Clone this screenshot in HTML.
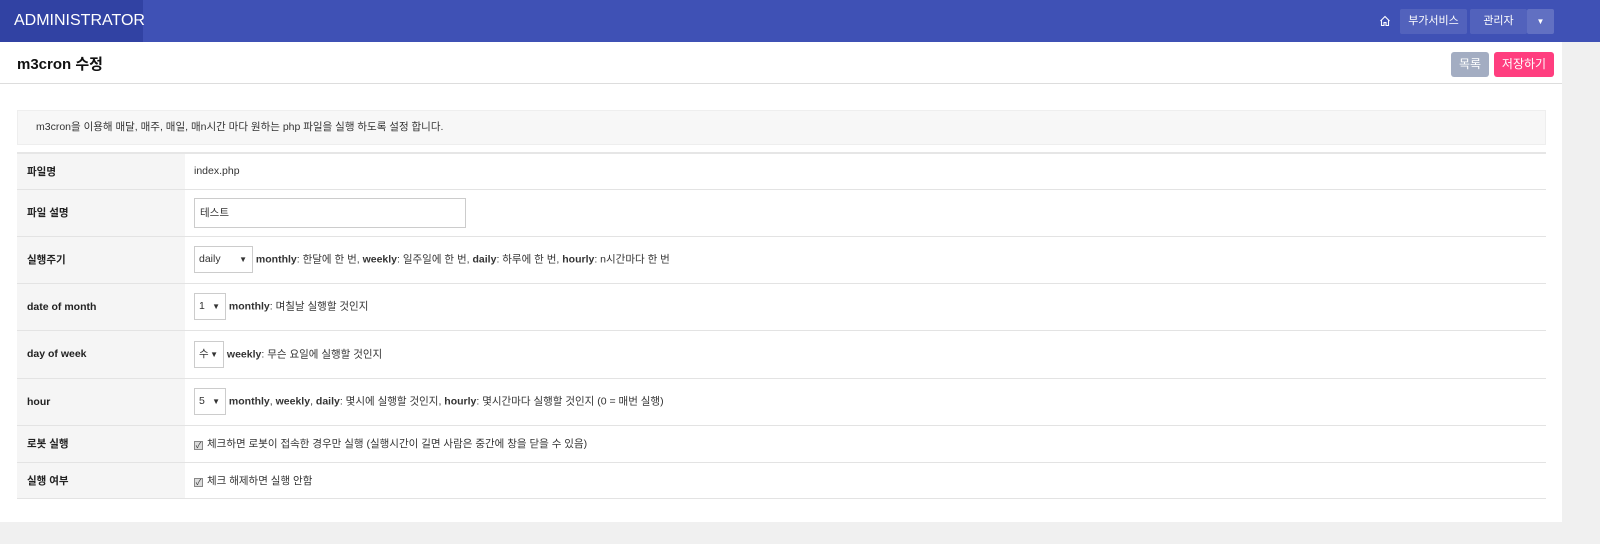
<!DOCTYPE html>
<html><head><meta charset="utf-8"><style>
*{box-sizing:border-box;margin:0;padding:0}
body{width:1600px;height:544px;background:#f0f0f0;font-family:"Liberation Sans","Noto Sans CJK KR",sans-serif;font-size:11px;color:#333;position:relative;overflow:hidden}
.hdr{position:absolute;left:0;top:0;width:1600px;height:42px;background:#3f51b5}
.brand{position:absolute;left:0;top:0;width:143px;height:42px;background:#3142a3;color:#fff;font-size:16px;line-height:42px;padding-left:14px}
.hb{position:absolute;top:9px;height:25px;background:rgba(255,255,255,.1);color:#fff;font-size:11px;line-height:25px;text-align:center;border-radius:2px}
.wrap{position:absolute;left:0;top:42px;width:1562px;height:480px;background:#fff}
.title{height:42px;border-bottom:1px solid #ddd;position:relative}
.title h1{position:absolute;left:17px;top:11px;font-size:15px;font-weight:bold;color:#111}
.btn{position:absolute;top:10px;height:25px;border-radius:3px;color:#fff;font-size:12px;line-height:25px;text-align:center}
.notice{position:absolute;left:17px;top:68px;width:1529px;height:35px;background:#f7f7f7;border:1px solid #eee;padding-left:18px;line-height:33px;font-size:10.5px}
table{position:absolute;left:17px;top:110px;width:1529px;border-collapse:collapse;border-top:2px solid #e6e6e6}
td{border-bottom:1px solid #e3e3e3;vertical-align:middle;font-size:10.5px}
td.l{width:168px;background:#f5f5f5;font-weight:bold;padding-left:10px;color:#222}
td.v{padding-left:9px}
.sel{display:inline-block;height:27px;border:1px solid #ccc;vertical-align:middle;line-height:25px;padding-left:4px;position:relative;background:#fff}
.sel:after{content:"▼";position:absolute;right:5px;top:0;font-size:8px}
.cb{display:inline-block;width:9px;height:9px;border:1px solid #888;background:#ddd;vertical-align:-1px;margin-right:4px;font-size:8px;line-height:7px;text-align:center}
b{font-weight:bold}
</style></head><body>
<div class="hdr"><div class="brand">ADMINISTRATOR</div>
<svg style="position:absolute;left:1379px;top:15px" width="12" height="12" viewBox="0 0 12 12"><path d="M1.5 6L6 1.5 10.5 6M2.5 5v5.5h2.5v-3h2v3h2.5V5" fill="none" stroke="#fff" stroke-width="1.1"/></svg>
<div class="hb" style="left:1400px;width:67px">부가서비스</div>
<div class="hb" style="left:1470px;width:57px">관리자</div>
<div class="hb" style="left:1527px;width:27px;background:rgba(255,255,255,.18);font-size:8px">▼</div>
</div>
<div class="wrap">
<div class="title"><h1>m3cron 수정</h1>
<div class="btn" style="left:1451px;width:38px;background:#a3adc2">목록</div>
<div class="btn" style="left:1494px;width:60px;background:#ff3e7f">저장하기</div></div>
<div class="notice">m3cron을 이용해 매달, 매주, 매일, 매n시간 마다 원하는 php 파일을 실행 하도록 설정 합니다.</div>
<table>
<tr style="height:36px"><td class="l">파일명</td><td class="v">index.php</td></tr>
<tr style="height:47px"><td class="l">파일 설명</td><td class="v"><span style="display:inline-block;width:272px;height:30px;border:1px solid #ccc;line-height:28px;padding-left:5px">테스트</span></td></tr>
<tr style="height:47px"><td class="l">실행주기</td><td class="v"><span class="sel" style="width:59px">daily</span> <b>monthly</b>: 한달에 한 번, <b>weekly</b>: 일주일에 한 번, <b>daily</b>: 하루에 한 번, <b>hourly</b>: n시간마다 한 번</td></tr>
<tr style="height:47px"><td class="l">date of month</td><td class="v"><span class="sel" style="width:32px">1</span> <b>monthly</b>: 며칠날 실행할 것인지</td></tr>
<tr style="height:48px"><td class="l">day of week</td><td class="v"><span class="sel" style="width:30px">수</span> <b>weekly</b>: 무슨 요일에 실행할 것인지</td></tr>
<tr style="height:47px"><td class="l">hour</td><td class="v"><span class="sel" style="width:32px">5</span> <b>monthly</b>, <b>weekly</b>, <b>daily</b>: 몇시에 실행할 것인지, <b>hourly</b>: 몇시간마다 실행할 것인지 (0 = 매번 실행)</td></tr>
<tr style="height:37px"><td class="l">로봇 실행</td><td class="v"><span class="cb">✓</span>체크하면 로봇이 접속한 경우만 실행 (실행시간이 길면 사람은 중간에 창을 닫을 수 있음)</td></tr>
<tr style="height:36px"><td class="l">실행 여부</td><td class="v"><span class="cb">✓</span>체크 해제하면 실행 안함</td></tr>
</table>
</div>
</body></html>
